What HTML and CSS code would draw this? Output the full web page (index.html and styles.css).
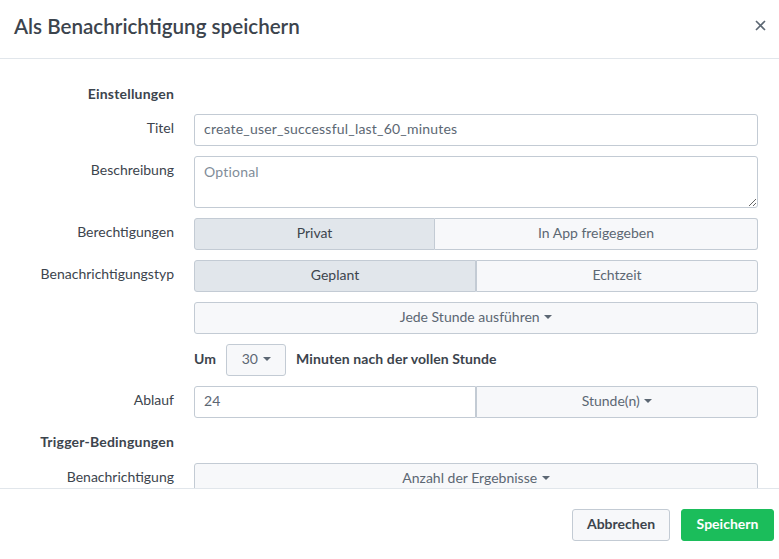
FILE: index.html
```html
<!DOCTYPE html>
<html lang="de">
<head>
<meta charset="utf-8">
<title>Als Benachrichtigung speichern</title>
<link rel="stylesheet" href="styles.css">
</head>
<body>
<div class="dialog">
  <header class="dlg-head">
    <h1 class="dlg-title">Als Benachrichtigung speichern</h1>
    <button class="close" aria-label="Schließen">
      <svg width="11" height="11" viewBox="0 0 11 11"><path d="M1 1L10 10M10 1L1 10" stroke="#5c6773" stroke-width="1.6" fill="none"/></svg>
    </button>
  </header>
  <main class="dlg-body">
    <div class="form">
      <div class="section">Einstellungen</div>
      <div class="spacer"></div>

      <label class="label">Titel</label>
      <input class="input" type="text" value="create_user_successful_last_60_minutes">

      <label class="label">Beschreibung</label>
      <textarea class="textarea" placeholder="Optional"></textarea>

      <label class="label">Berechtigungen</label>
      <div class="seg seg-perm">
        <button class="seg-btn active">Privat</button>
        <button class="seg-btn">In App freigegeben</button>
      </div>

      <label class="label">Benachrichtigungstyp</label>
      <div class="seg seg-half">
        <button class="seg-btn active">Geplant</button>
        <button class="seg-btn">Echtzeit</button>
      </div>

      <div class="label"></div>
      <button class="btn dropdown">Jede Stunde ausführen <span class="caret"></span></button>

      <div class="label"></div>
      <div class="inline-row">
        <span class="strong">Um</span>
        <button class="btn small-dd">30 <span class="caret"></span></button>
        <span class="strong">Minuten nach der vollen Stunde</span>
      </div>

      <label class="label">Ablauf</label>
      <div class="seg seg-half">
        <input class="seg-input" type="text" value="24">
        <button class="seg-btn">Stunde(n) <span class="caret"></span></button>
      </div>

      <div class="section section-2">Trigger-Bedingungen</div>
      <div class="spacer section-2"></div>

      <label class="label">Benachrichtigung</label>
      <button class="btn dropdown">Anzahl der Ergebnisse <span class="caret"></span></button>
    </div>
  </main>
  <footer class="dlg-foot">
    <button class="fbtn cancel">Abbrechen</button>
    <button class="fbtn primary">Speichern</button>
  </footer>
</div>
</body>
</html>
```

FILE: styles.css
```css
* { box-sizing: border-box; }
html, body { margin: 0; padding: 0; }
body {
  font-family: Lato, "Open Sans", sans-serif;
  font-size: 14px;
  color: #3c444d;
  background: #fff;
}
button, input, textarea { font-family: inherit; font-size: 14px; }

.dialog {
  width: 779px;
  height: 559px;
  display: flex;
  flex-direction: column;
  overflow: hidden;
}

.dlg-head {
  height: 59px;
  flex: none;
  border-bottom: 1px solid #e1e6eb;
  display: flex;
  align-items: center;
  justify-content: space-between;
  padding: 0 12px 7px 14px;
}
.dlg-title {
  margin: 0;
  font-size: 20.6px;
  font-weight: 600;
  color: #3c444d;
}
.close {
  border: 0;
  background: none;
  padding: 0;
  width: 12px;
  height: 12px;
  display: flex;
}

.dlg-body {
  flex: 1;
  overflow: hidden;
}
.form {
  display: grid;
  grid-template-columns: 174px 564px;
  column-gap: 20px;
  row-gap: 10px;
  padding-top: 25px;
  align-items: start;
}
.section {
  font-weight: 700;
  font-size: 14px;
  letter-spacing: 0.2px;
  text-align: right;
  line-height: 20px;
  color: #3c444d;
}
.spacer { height: 20px; }
.section-2 { margin-top: 4px; }
.spacer.section-2 { margin-bottom: 1px; }

.label {
  text-align: right;
  line-height: 20px;
  padding-top: 4px;
  color: #3c444d;
}

.input, .textarea, .seg-input {
  height: 32px;
  border: 1px solid #c3cbd4;
  border-radius: 3px;
  padding: 0 9px 3px;
  color: #5c6773;
  background: #fff;
  outline: none;
  letter-spacing: 0.2px;
}
.input { width: 100%; }
.textarea {
  width: 100%;
  height: 52px;
  padding: 5px 9px;
  resize: vertical;
  display: block;
  line-height: 20px;
}
.textarea::placeholder { color: #818d99; }

.seg {
  display: flex;
  height: 32px;
}
.seg-btn {
  height: 32px;
  border: 1px solid #c3cbd4;
  background: #f7f8fa;
  color: #5c6773;
  padding: 0 0 3px;
  margin: 0;
}
.seg-btn.active {
  background: #e1e6eb;
  color: #3c444d;
}
.seg > :first-child { border-radius: 3px 0 0 3px; }
.seg > :last-child { border-radius: 0 3px 3px 0; border-left: 0; }
.seg-perm .seg-btn:first-child { width: 241px; }
.seg-perm .seg-btn:last-child { flex: 1; }
.seg-half .seg-btn:last-child { border-left: 1px solid #c3cbd4; }
.seg-half > :first-child { width: 282px; }
.seg-half > :last-child { flex: 1; }
.seg-input { border-radius: 3px 0 0 3px; }

.btn {
  height: 32px;
  border: 1px solid #c3cbd4;
  border-radius: 3px;
  background: #f7f8fa;
  color: #5c6773;
  padding: 0 0 3px;
}
.dropdown { width: 100%; }
.caret {
  display: inline-block;
  width: 0;
  height: 0;
  border-left: 4px solid transparent;
  border-right: 4px solid transparent;
  border-top: 4px solid #5c6773;
  vertical-align: middle;
  margin-left: 1px;
  position: relative;
  top: -1px;
}

.inline-row {
  display: flex;
  align-items: center;
  gap: 10px;
  height: 32px;
}
.strong { font-weight: 700; font-size: 14px; letter-spacing: 0.1px; color: #3c444d; padding-bottom: 3px; }
.small-dd { width: 60px; }

.dlg-foot {
  flex: none;
  height: 71px;
  border-top: 1px solid #e1e6eb;
  display: flex;
  justify-content: flex-end;
  align-items: flex-start;
  gap: 11px;
  padding: 20px 5px 0 0;
}
.fbtn {
  height: 32px;
  border-radius: 3px;
  font-weight: 700;
  font-size: 14px;
  padding: 0 0 3px;
}
.cancel {
  width: 98px;
  border: 1px solid #c3cbd4;
  background: #f7f8fa;
  color: #3c444d;
}
.primary {
  width: 93px;
  border: 1px solid #1bbd5b;
  background: #1bbd5b;
  color: #fff;
}
```
